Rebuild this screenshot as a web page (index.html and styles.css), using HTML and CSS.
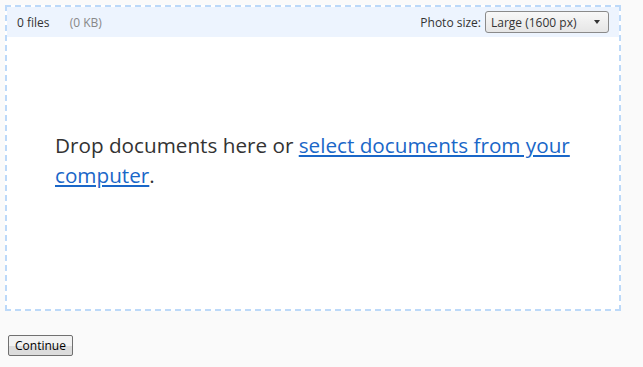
FILE: index.html
```html
<!DOCTYPE html>
<html lang="en">
<head>
    <meta charset="UTF-8">
    <title>Upload documents</title>
    <link rel="stylesheet" href="styles.css">
</head>
<body>
    <!-- Drop zone -->
    <div class="dropzone">
        <div class="dz-header">
            <div class="dz-count">
                <span class="files">0 files</span>
                <span class="size">(0 KB)</span>
            </div>
            <label class="photo-size">
                Photo size:
                <span class="select">
                    <span class="select-text">Large (1600 px)</span>
                    <span class="select-arrow"></span>
                </span>
            </label>
        </div>
        <div class="dz-body">
            <p class="dz-message">Drop documents here or <a href="#">select documents from your computer</a>.</p>
        </div>
    </div>

    <div class="actions">
        <button class="continue-btn">Continue</button>
    </div>
</body>
</html>
```

FILE: styles.css
```css
body {
    margin: 0;
    background: #fafafa;
    font-family: "Open Sans", "Noto Sans", sans-serif;
    color: #333;
}

.dropzone {
    margin: 5px 0 0 5px;
    width: 612px;
    height: 302px;
    border: 2px dashed #bcd9f9;
    background: #fff;
    display: flex;
    flex-direction: column;
}

.dz-header {
    height: 30px;
    background: #edf4fe;
    display: flex;
    align-items: center;
    justify-content: space-between;
    padding: 0 10px 0 10px;
    font-size: 12px;
}

.dz-count .size {
    color: #888;
    margin-left: 17px;
}

.photo-size {
    display: flex;
    align-items: center;
    gap: 4px;
}

.select {
    width: 109px;
    height: 20px;
    border: 1px solid #8a8a8a;
    border-radius: 3px;
    background: linear-gradient(#f8f8f8, #e6e6e6);
    display: flex;
    align-items: center;
    justify-content: space-between;
    padding: 0 8px 0 5px;
}

.select-arrow {
    width: 0;
    height: 0;
    border-left: 3px solid transparent;
    border-right: 3px solid transparent;
    border-top: 4px solid #333;
}

.dz-body {
    flex: 1;
    padding: 0 20px 0 48px;
    display: flex;
    align-items: center;
}

.dz-message {
    margin: 0 0 26px;
    font-size: 20.7px;
    line-height: 30px;
    color: #333;
}

.dz-message a {
    color: #1a67c8;
}

.actions {
    padding: 22px 8px 0;
}

.continue-btn {
    font-family: "Open Sans", sans-serif;
    font-size: 12px;
    color: #000;
    padding: 1px 6px;
    height: 21px;
    border: 1px solid #707070;
    border-radius: 2px;
    background: linear-gradient(#f2f2f2 50%, #dcdcdc 50%);
}
```
